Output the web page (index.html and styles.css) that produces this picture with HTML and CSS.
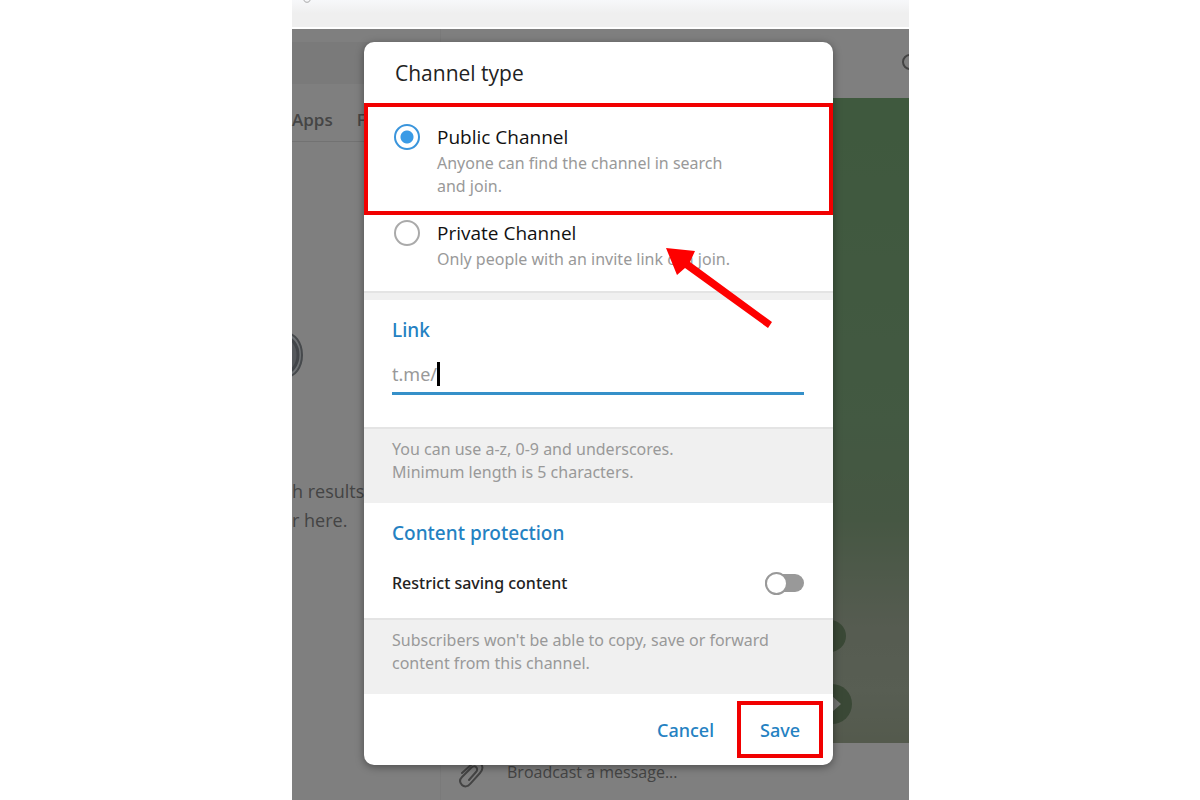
FILE: index.html
```html
<!DOCTYPE html>
<html lang="en">
<head>
  <meta charset="UTF-8" />
  <meta name="viewport" content="width=device-width, initial-scale=1.0"/>
  <title>Channel type</title>
  <link rel="stylesheet" href="styles.css">
</head>
<body>
  <div class="window">
    <header class="titlebar">
      <svg viewBox="0 0 8 4" width="8" height="4">
        <path d="M1 0c0 3 6 3 6 0" fill="none" stroke="#aaa"/>
      </svg>
    </header>

    <div class="main">
      <aside class="sidebar">
        <div class="search"></div>
        <nav class="tabs">
          <span>Apps</span>
          <span>Files</span>
        </nav>
        <svg class="finder" viewBox="0 0 12 50" width="12" height="50">
          <ellipse cx="-6" cy="25" rx="16" ry="22" fill="#dce3e8" stroke="#8c9298" stroke-width="2"/>
          <ellipse cx="-8" cy="25" rx="14" ry="18" fill="#aab0b8" stroke="#848a92" stroke-width="3"/>
        </svg>
        <p class="empty">h results<br>r here.</p>
      </aside>

      <section class="chat">
        <div class="chat-header">
          <svg viewBox="0 0 8 20" width="8" height="20">
            <circle cx="9" cy="10" r="7" fill="none" stroke="#888" stroke-width="2"/>
          </svg>
        </div>
        <div class="wallpaper">
          <span class="bubble small"></span>
          <span class="bubble">
            <svg viewBox="0 0 12 18" width="12" height="18"><path d="M2 1l9 8-9 8z" fill="#e4e8e2"/></svg>
          </span>
        </div>
        <div class="composer">
          <svg viewBox="0 0 28 28" width="28" height="28" fill="none" stroke="#888" stroke-width="2" stroke-linecap="round">
            <path d="M11 20L18 12c2-2 1-4 0-5s-3-1-5 1L4 17c-3 3-2 6 0 8s6 2 8-1L22 13c3-3 3-7 1-9s-6-3-9 0L4 13"/>
          </svg>
          <span>Broadcast a message...</span>
        </div>
      </section>

      <div class="overlay">
        <form class="dialog">
          <h1 class="dialog-title">Channel type</h1>

          <div class="option marked">
            <input type="radio" name="type" id="public" checked />
            <div class="option-text">
              <label for="public">Public Channel</label>
              <p>Anyone can find the channel in search<br>and join.</p>
            </div>
          </div>
          <div class="option">
            <input type="radio" name="type" id="private" />
            <div class="option-text">
              <label for="private">Private Channel</label>
              <p>Only people with an invite link can join.</p>
            </div>
            <svg class="arrow" viewBox="0 0 106 80" width="106" height="80" fill="#fe0000">
              <path d="M0 0L29 3 24 14 106 74 102 80 19 20 11 27z"/>
            </svg>
          </div>

          <div class="divider"></div>

          <section class="link">
            <h2><label for="link">Link</label></h2>
            <div class="field">
              <span>t.me/</span>
              <i class="caret"></i>
              <input type="text" id="link" />
            </div>
          </section>
          <p class="note">You can use a-z, 0-9 and underscores.<br>Minimum length is 5 characters.</p>

          <section class="protection">
            <h2>Content protection</h2>
            <div class="row">
              <label for="restrict">Restrict saving content</label>
              <input type="checkbox" class="switch" id="restrict" />
            </div>
          </section>
          <p class="note">Subscribers won't be able to copy, save or forward<br>content from this channel.</p>

          <footer class="buttons">
            <button type="button">Cancel</button>
            <button type="button" class="save">Save</button>
          </footer>
        </form>
      </div>
    </div>
  </div>
</body>
</html>
```
FILE: styles.css
```css
* {
  box-sizing: border-box;
}

body {
  margin: 0;
  padding: 0 291px 0 292px;
  background: #fff;
  font-family: "Open Sans", "Noto Sans", sans-serif;
  overflow: hidden;
}

h1, h2, p {
  margin: 0;
}

.window {
  display: flex;
  flex-direction: column;
  height: 100vh;
}

.titlebar {
  display: flex;
  height: 29px;
  padding-left: 11px;
  background: linear-gradient(#f7f8fa, #efefef 50%);
  border-bottom: 2px solid #fff;
}

.main {
  position: relative;
  display: flex;
  flex: 1;
  min-height: 0;
}

/* chat list */
.sidebar {
  width: 149px;
  padding-top: 13px;
  background: #fff;
  border-right: 1px solid #f4f4f4;
}

.search {
  height: 42px;
  background: #f4f4f4;
}

.tabs {
  display: flex;
  gap: 24px;
  height: 58px;
  padding-top: 24px;
  border-bottom: 1px solid #e4e4e4;
  color: #8a8a8a;
  font-size: 17px;
  font-weight: 600;
  line-height: 24px;
}

.finder {
  display: block;
  margin-top: 188px;
}

.empty {
  margin-top: 97px;
  color: #888;
  font-size: 18px;
  line-height: 29px;
  white-space: nowrap;
}

/* conversation */
.chat {
  display: flex;
  flex: 1;
  flex-direction: column;
}

.chat-header {
  display: flex;
  justify-content: flex-end;
  height: 69px;
  padding-top: 23px;
  background: #fff;
}

.wallpaper {
  display: flex;
  flex: 1;
  flex-direction: column;
  align-items: flex-end;
  justify-content: flex-end;
  gap: 32px;
  padding: 0 57px 19px 0;
  background: linear-gradient(#7eb27c, #86b284 50%, #8cae86 65%, #acb8a2 82%, #b0bca6 92%, #a8b49a);
}

.bubble {
  display: flex;
  align-items: center;
  justify-content: flex-end;
  width: 40px;
  height: 40px;
  padding-right: 10px;
  border-radius: 50%;
  background: #74906c;
}

.bubble.small {
  width: 32px;
  height: 32px;
  margin-right: 6px;
}

.composer {
  display: flex;
  gap: 21px;
  height: 57px;
  padding: 17px 0 0 17px;
  background: #fff;
  color: #888;
  font-size: 16px;
  line-height: 24px;
}

/* dialog */
.overlay {
  position: absolute;
  inset: 0;
  padding: 13px 76px 0 72px;
  background: rgba(0, 0, 0, 0.5);
}

.dialog {
  border-radius: 10px;
  background: #fff;
  box-shadow: 0 2px 8px rgba(0, 0, 0, 0.4);
  color: #222;
  font-family: "Noto Sans", "Open Sans", sans-serif;
}

.dialog-title {
  height: 61px;
  padding: 17px 31px 0;
  font-family: "Open Sans", "Noto Sans", sans-serif;
  font-size: 21px;
  font-weight: 500;
  line-height: 28px;
}

.option {
  position: relative;
  display: flex;
  gap: 17px;
  height: 76px;
  padding: 5px 30px 0;
}

.option.marked {
  height: 112px;
  padding: 17px 26px 0;
  border: 4px solid #f10000;
}

.option input {
  appearance: none;
  width: 26px;
  height: 26px;
  margin: 0;
  border: 2px solid #aaa;
  border-radius: 50%;
}

.option input:checked {
  border-color: #3a95dc;
  background: radial-gradient(circle, #3a9be6 6px, transparent 7px);
}

.option label {
  display: block;
  color: #111;
  font-family: "Open Sans", "Noto Sans", sans-serif;
  font-size: 19px;
  font-weight: 400;
  line-height: 26px;
}

.option p {
  margin-top: 2px;
  color: #999;
  font-size: 16px;
  line-height: 23px;
}

.arrow {
  position: absolute;
  top: 33px;
  left: 302px;
}

.divider {
  height: 9px;
  background: #f0f0f0;
  border-top: 2px solid #e4e4e4;
}

h2 {
  color: #2481c2;
  font-size: 19px;
  font-weight: 500;
  line-height: 26px;
}

.link {
  height: 127px;
  padding: 17px 29px 0 28px;
}

.field {
  display: flex;
  align-items: center;
  height: 36px;
  margin-top: 16px;
  padding-bottom: 4px;
  border-bottom: 3px solid #3590c9;
  color: #999;
  font-size: 18px;
}

.caret {
  width: 3px;
  height: 24px;
  background: #000;
}

.field input {
  flex: 1;
  min-width: 0;
  padding: 0;
  border: none;
  outline: none;
  background: none;
  font: inherit;
}

.note {
  height: 76px;
  padding: 9px 28px 0;
  background: #f0f0f0;
  border-top: 2px solid #e4e4e4;
  color: #999;
  font-size: 16px;
  line-height: 23px;
}

.protection {
  height: 115px;
  padding: 17px 29px 0 28px;
}

.row {
  display: flex;
  align-items: center;
  justify-content: space-between;
  margin-top: 24px;
  font-size: 16px;
  font-weight: 500;
  line-height: 26px;
}

.switch {
  appearance: none;
  display: flex;
  align-items: center;
  width: 39px;
  height: 18px;
  margin: 0;
  border-radius: 9px;
  background: #999;
}

.switch::before {
  content: "";
  width: 23px;
  height: 23px;
  flex: none;
  box-sizing: border-box;
  border: 2px solid #999;
  border-radius: 50%;
  background: #fff;
}

.buttons {
  display: flex;
  justify-content: flex-end;
  gap: 8px;
  height: 71px;
  padding: 7px 10px 0;
}

.buttons button {
  height: 57px;
  padding: 0 15px;
  border: none;
  background: none;
  color: #2481c2;
  font-family: inherit;
  font-size: 18px;
  font-weight: 500;
}

.buttons .save {
  width: 86px;
  border: 4px solid #f10000;
}
```
